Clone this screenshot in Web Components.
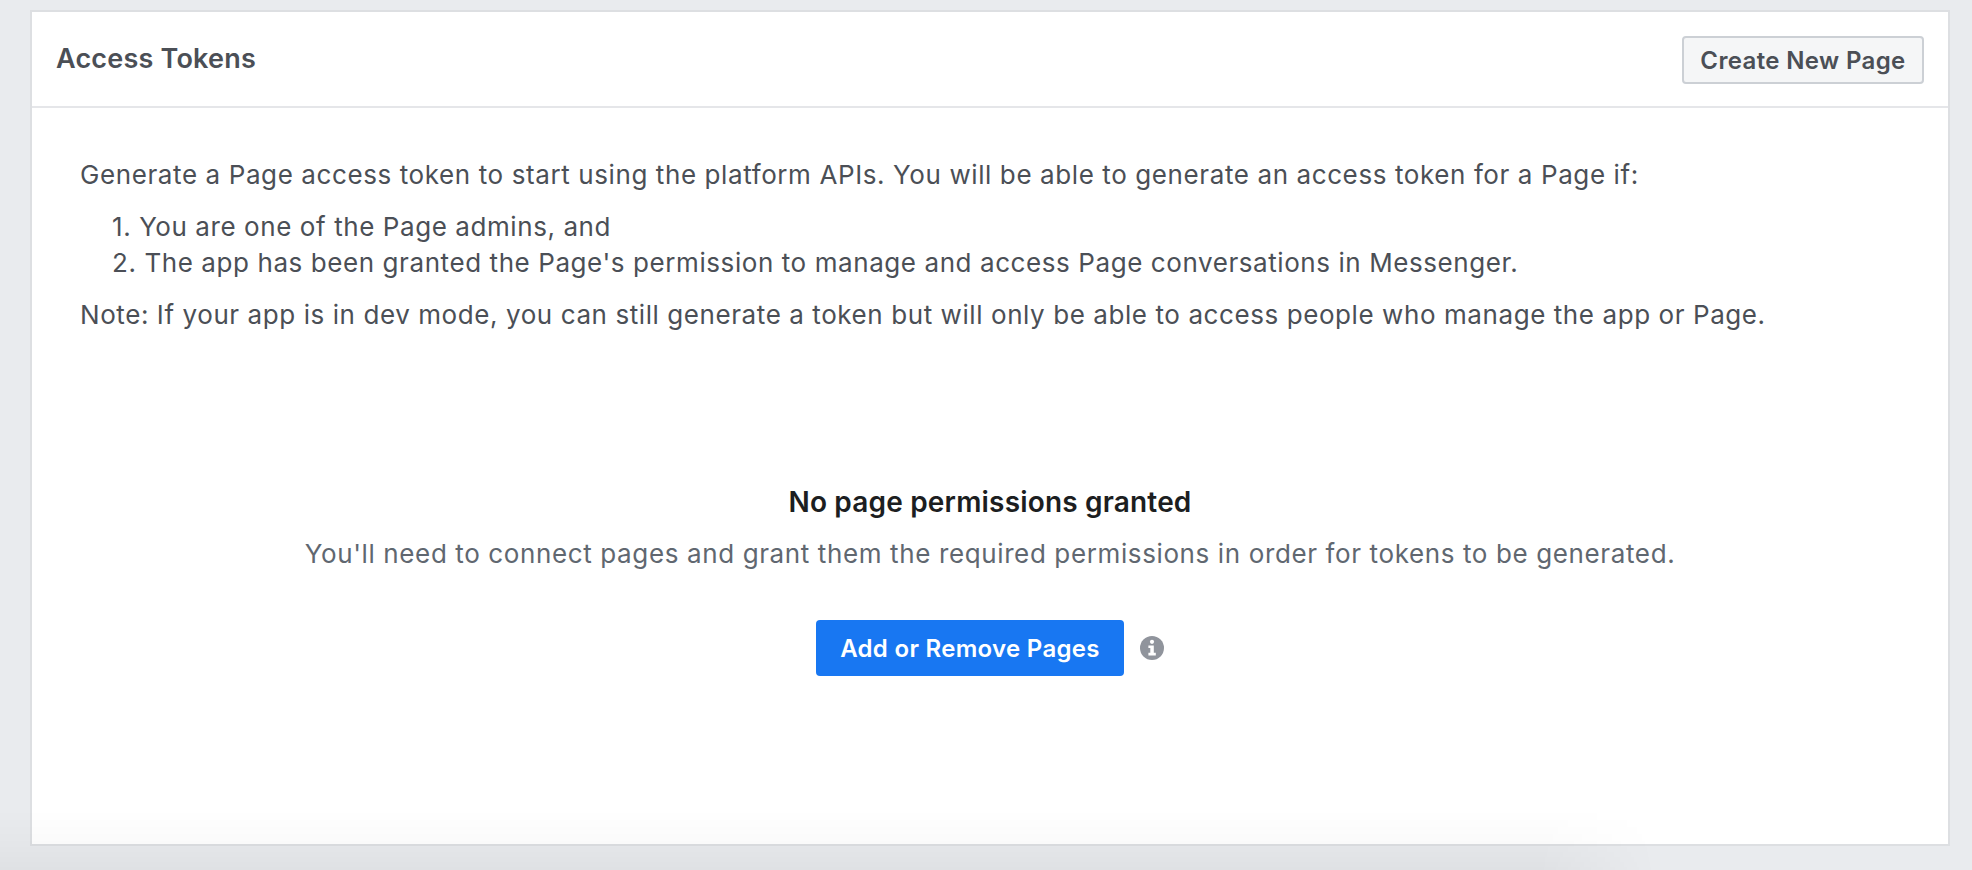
<!DOCTYPE html>
<html>
<head>
<meta charset="utf-8">
<title>Access Tokens</title>
<style>
  html, body { margin: 0; height: 100%; }
  body {
    background: #e9ebee;
    font-family: Inter, "Liberation Sans", sans-serif;
    overflow: hidden;
  }
</style>
</head>
<body>
<token-panel heading="Access Tokens">
  <fb-button slot="action">Create New Page</fb-button>
  <token-intro></token-intro>
  <empty-state></empty-state>
</token-panel>
<bottom-shade></bottom-shade>

<script>
class TokenPanel extends HTMLElement {
  constructor() {
    super();
    this.attachShadow({ mode: 'open' });
    this.shadowRoot.innerHTML = `
      <style>
        :host {
          display: block;
          box-sizing: border-box;
          width: 1920px;
          height: 836px;
          margin: 10px 0 0 30px;
          background: #fff;
          border: 2px solid #dddfe2;
        }
        .head {
          display: flex;
          align-items: center;
          justify-content: space-between;
          box-sizing: border-box;
          height: 96px;
          padding: 2px 24px 0;
          border-bottom: 2px solid #e5e6e9;
        }
        h2 {
          margin: -3px 0 0;
          font-size: 27px;
          font-weight: 600;
          letter-spacing: 0.2px;
          color: #4b4f56;
        }
      </style>
      <div class="head">
        <h2>${this.getAttribute('heading')}</h2>
        <slot name="action"></slot>
      </div>
      <slot></slot>
    `;
  }
}

class FbButton extends HTMLElement {
  constructor() {
    super();
    this.attachShadow({ mode: 'open' });
    this.shadowRoot.innerHTML = `
      <style>
        :host {
          display: inline-flex;
          align-items: center;
          justify-content: center;
          box-sizing: border-box;
          height: 48px;
          width: 242px;
          font-size: 24px;
          font-weight: 600;
          letter-spacing: 0.36px;
          color: #4b4f56;
          background: #f5f6f7;
          border: 2px solid #ccd0d5;
          border-radius: 4px;
          white-space: nowrap;
        }
        :host([primary]) {
          height: 56px;
          width: 308px;
          letter-spacing: 0.3px;
          color: #fff;
          background: #1877f2;
          border: 0;
        }
      </style>
      <slot></slot>
    `;
  }
}

class TokenIntro extends HTMLElement {
  constructor() {
    super();
    this.attachShadow({ mode: 'open' });
    this.shadowRoot.innerHTML = `
      <style>
        :host {
          display: block;
          padding: 49px 48px 0;
          font-size: 26px;
          letter-spacing: 0.58px;
          line-height: 36px;
          color: #4b4f56;
        }
        p { margin: 0; }
        p.first { letter-spacing: 0.6px; }
        ol {
          margin: 16px 0;
          padding: 0 0 0 32px;
          list-style-position: inside;
        }
        li::marker { font-variant-numeric: normal; }
      </style>
      <p class="first">Generate a Page access token to start using the platform APIs. You will be able to generate an access token for a Page if:</p>
      <ol>
        <li>You are one of the Page admins, and</li>
        <li>The app has been granted the Page's permission to manage and access Page conversations in Messenger.</li>
      </ol>
      <p>Note: If your app is in dev mode, you can still generate a token but will only be able to access people who manage the app or Page.</p>
    `;
  }
}

class EmptyState extends HTMLElement {
  constructor() {
    super();
    this.attachShadow({ mode: 'open' });
    this.shadowRoot.innerHTML = `
      <style>
        :host {
          display: flex;
          flex-direction: column;
          align-items: center;
          padding-top: 151px;
          text-align: center;
        }
        h3 {
          margin: 0;
          font-size: 28px;
          line-height: 36px;
          font-weight: 600;
          letter-spacing: 0.18px;
          color: #1c1e21;
        }
        p {
          margin: 16px 0 48px;
          font-size: 26px;
          letter-spacing: 0.62px;
          line-height: 36px;
          color: #606770;
        }
        .actions {
          display: flex;
          align-items: center;
          gap: 16px;
        }
        svg { display: block; }
      </style>
      <h3>No page permissions granted</h3>
      <p>You'll need to connect pages and grant them the required permissions in order for tokens to be generated.</p>
      <div class="actions">
        <fb-button primary>Add or Remove Pages</fb-button>
        <svg width="24" height="24" viewBox="0 0 24 24" aria-hidden="true">
          <circle cx="12" cy="12" r="12" fill="#90949c"/>
          <circle cx="12" cy="5.8" r="2.1" fill="#fff"/>
          <path d="M8.4 9.4h5.4v7.4h2v2.6H8.4v-2.6h1.9v-4.8H8.4z" fill="#fff"/>
        </svg>
      </div>
    `;
  }
}

// faint shading that lies over the bottom of the page in the screenshot
class BottomShade extends HTMLElement {
  constructor() {
    super();
    this.attachShadow({ mode: 'open' });
    this.shadowRoot.innerHTML = `
      <style>
        :host {
          display: block;
          position: fixed;
          left: 0;
          right: 0;
          bottom: 0;
          height: 60px;
          pointer-events: none;
          background: linear-gradient(180deg, rgba(0,0,0,0) 0%, rgba(0,0,0,.012) 35%, rgba(0,0,0,.02) 57%, rgba(0,0,0,.04) 100%);
          -webkit-mask-image: linear-gradient(90deg, #000 78%, transparent 84%);
          mask-image: linear-gradient(90deg, #000 78%, transparent 84%);
        }
      </style>
    `;
  }
}

customElements.define('fb-button', FbButton);
customElements.define('token-intro', TokenIntro);
customElements.define('empty-state', EmptyState);
customElements.define('token-panel', TokenPanel);
customElements.define('bottom-shade', BottomShade);
</script>
</body>
</html>
